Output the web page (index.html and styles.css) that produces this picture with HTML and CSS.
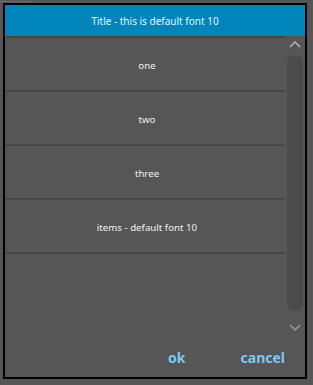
FILE: index.html
```html
<!DOCTYPE html>
<html lang="en">
<head>
    <meta charset="UTF-8">
    <meta name="viewport" content="width=device-width, initial-scale=1.0">
    <title>Dialog</title>
    <link rel="stylesheet" href="styles.css">
</head>
<body>
    <div class="topline"></div>
    <div class="dialog">
        <div class="title">Title - this is default font 10</div>
        <div class="body">
            <ul class="list">
                <li>one</li>
                <li>two</li>
                <li>three</li>
                <li>items - default font 10</li>
            </ul>
            <div class="scroll">
                <svg class="arrow" width="12" height="7" viewBox="0 0 12 7">
                    <polyline points="1,6 6,1 11,6" fill="none" stroke="#b4b4b4" stroke-width="1.5"/>
                </svg>
                <div class="track"></div>
                <svg class="arrow" width="12" height="7" viewBox="0 0 12 7">
                    <polyline points="1,1 6,6 11,1" fill="none" stroke="#9a9a9a" stroke-width="1.5"/>
                </svg>
            </div>
        </div>
        <div class="footer">
            <button class="btn">ok</button>
            <button class="btn">cancel</button>
        </div>
    </div>
</body>
</html>
```

FILE: styles.css
```css
body {
    margin: 0;
    padding: 0;
    background-color: #565656;
    font-family: "Noto Sans", "Open Sans", sans-serif;
    width: 313px;
    height: 385px;
    overflow: hidden;
    position: relative;
}
.topline {
    position: absolute;
    top: 1px;
    left: 0;
    width: 33px;
    height: 1px;
    background: #6a6a6a;
}
.dialog {
    margin: 3px 0 0 3px;
    width: 300px;
    height: 372px;
    border: 2px solid #000;
    display: flex;
    flex-direction: column;
}
.title {
    height: 30px;
    padding-top: 1px;
    background: #0085bb;
    color: #e8f4fa;
    font-size: 10px;
    text-align: center;
    line-height: 31px;
}
.body {
    height: 300px;
    display: flex;
}
.list {
    list-style: none;
    margin: 0 0 0 1px;
    padding: 0;
    width: 279px;
    border-top: 2px solid #464646;
}
.list li {
    height: 50px;
    padding: 2px 0 0 3px;
    line-height: 52px;
    border-bottom: 2px solid #464646;
    color: #f0f0f0;
    font-size: 9.7px;
    text-align: center;
}
.scroll {
    width: 18px;
    margin-left: 1px;
    display: flex;
    flex-direction: column;
    align-items: center;
    padding-top: 5px;
}
.arrow {
    display: block;
}
.track {
    width: 16px;
    height: 256px;
    margin: 7px 0 13px;
    border-radius: 8px;
    background: #4b4b4b;
}
.footer {
    flex: 1;
    display: flex;
    justify-content: flex-end;
    align-items: center;
    padding-right: 20px;
    padding-top: 1px;
}
.btn {
    background: none;
    border: none;
    padding: 0;
    color: #7cc8f2;
    font-family: "Noto Sans", "Open Sans", sans-serif;
    font-weight: bold;
    font-size: 14px;
    cursor: pointer;
}
.btn + .btn {
    margin-left: 55px;
}
```
